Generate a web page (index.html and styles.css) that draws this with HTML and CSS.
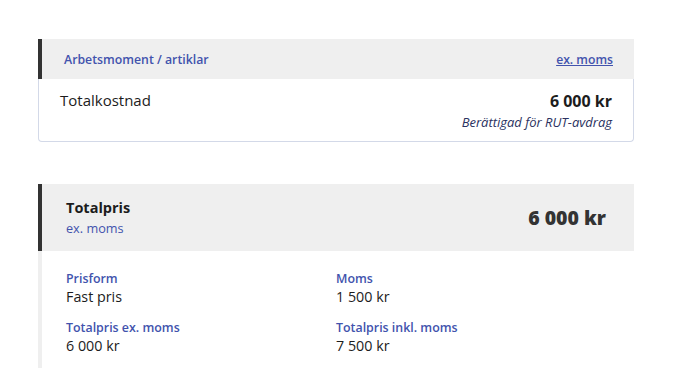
FILE: index.html
```html
<!DOCTYPE html>
<html lang="sv">
<head>
<meta charset="utf-8">
<link rel="stylesheet" href="styles.css">
</head>
<body>
<div class="page">
  <section class="card">
    <div class="card-head">
      <span class="head-title">Arbetsmoment / artiklar</span>
      <a class="head-link" href="#">ex. moms</a>
    </div>
    <div class="card-body">
      <div class="row">
        <span class="row-label">Totalkostnad</span>
        <div class="row-value">
          <span class="amount">6 000 kr</span>
          <span class="note">Berättigad för RUT-avdrag</span>
        </div>
      </div>
    </div>
  </section>

  <section class="summary">
    <div class="summary-head">
      <div class="summary-titles">
        <span class="summary-title">Totalpris</span>
        <span class="summary-sub">ex. moms</span>
      </div>
      <span class="summary-amount">6 000 kr</span>
    </div>
    <div class="summary-body">
      <div class="field">
        <span class="field-label">Prisform</span>
        <span class="field-value">Fast pris</span>
      </div>
      <div class="field">
        <span class="field-label">Moms</span>
        <span class="field-value">1 500 kr</span>
      </div>
      <div class="field">
        <span class="field-label">Totalpris ex. moms</span>
        <span class="field-value">6 000 kr</span>
      </div>
      <div class="field">
        <span class="field-label">Totalpris inkl. moms</span>
        <span class="field-value">7 500 kr</span>
      </div>
    </div>
  </section>
</div>
</body>
</html>
```

FILE: styles.css
```css
* { box-sizing: border-box; }
html, body { margin: 0; padding: 0; background: #fff; }
body {
  font-family: "Open Sans", "Noto Sans", sans-serif;
  color: #1c1c1c;
}
.page {
  width: 596px;
  margin-left: 38px;
  padding-top: 39px;
  display: flex;
  flex-direction: column;
  gap: 42px;
}
.card-head {
  height: 40px;
  background: #efefef;
  border-left: 4px solid #333;
  display: flex;
  align-items: center;
  justify-content: space-between;
  padding: 0 21px 0 22px;
}
.head-title {
  font-size: 12.3px;
  font-weight: 600;
  color: #4253ad;
}
.head-link {
  font-size: 12.2px;
  font-weight: 600;
  color: #4253ad;
  text-decoration: underline;
}
.card-body {
  border: 1px solid #d3d9e8;
  border-top: none;
  border-radius: 0 0 4px 4px;
  height: 63px;
  padding: 11px 21px 0 21px;
}
.row {
  display: flex;
  justify-content: space-between;
  align-items: flex-start;
}
.row-label {
  font-size: 15px;
  line-height: 20px;
}
.row-value {
  display: flex;
  flex-direction: column;
  align-items: flex-end;
}
.amount {
  font-size: 16px;
  font-weight: 700;
  line-height: 20px;
  margin-top: 1px;
}
.note {
  font-size: 13px;
  font-style: italic;
  color: #2a3160;
  line-height: 16px;
  margin-top: 3px;
}
.summary-head {
  height: 67px;
  background: #efefef;
  border-left: 4px solid #333;
  display: flex;
  align-items: center;
  justify-content: space-between;
  padding: 0 28px 0 24px;
}
.summary-titles {
  display: flex;
  flex-direction: column;
  gap: 3px;
}
.summary-title {
  font-size: 14.5px;
  font-weight: 700;
  color: #1c1c1c;
  line-height: 18px;
}
.summary-sub {
  font-size: 12.7px;
  color: #4253ad;
  line-height: 16px;
}
.summary-amount {
  font-size: 19.5px;
  font-weight: 800;
  color: #333;
}
.summary-body {
  border-left: 4px solid #efefef;
  display: grid;
  grid-template-columns: 270px 1fr;
  row-gap: 12px;
  padding: 19px 24px 12px 24px;
}
.field {
  display: flex;
  flex-direction: column;
}
.field-label {
  font-size: 12.4px;
  font-weight: 600;
  color: #4253ad;
  line-height: 17px;
}
.field-value {
  font-size: 14.3px;
  line-height: 20px;
}
```
